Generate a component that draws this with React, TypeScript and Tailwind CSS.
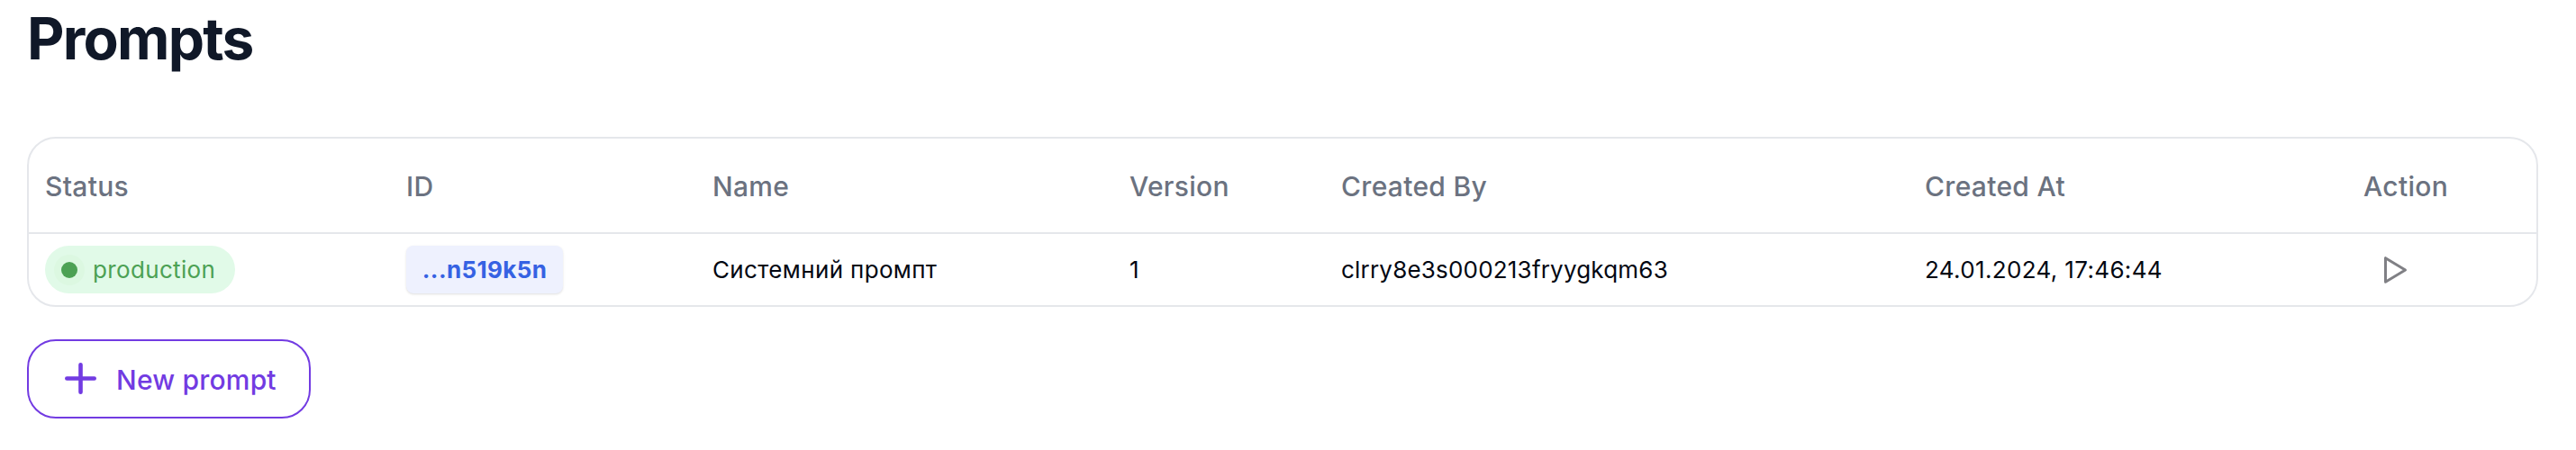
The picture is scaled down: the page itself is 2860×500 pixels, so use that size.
import React from "react";

const headers = ["Status", "ID", "Name", "Version", "Created By", "Created At", "Action"];
const columns = "grid grid-cols-[401px_340px_463px_235px_648px_487px_1fr] items-center pl-[18px]";

export default function App() {
  return (
    <main className="h-[500px] bg-white px-[30px] font-['Inter',sans-serif] text-[26px] leading-10 tracking-[0.35px] text-[#030712]">
      <h1 className="flex h-[152px] items-start pt-[3px] text-[64px] leading-[80px] font-bold tracking-[-0.027em] text-gray-900">
        Prompts
      </h1>
      <section className="w-[2788px] rounded-[32px] border-2 border-[#e5e7eb]">
        <div className={`${columns} h-[106px] border-b-2 border-[#e5e7eb] pt-0.5 text-[30px] font-medium tracking-[0.3px] text-[#6b7280]`}>
          {headers.map((header) => (
            <div key={header}>{header}</div>
          ))}
        </div>
        <div className={`${columns} h-[79px] whitespace-nowrap`}>
          <div className="flex">
            <span className="flex h-[53px] w-[211px] items-center rounded-full bg-[#e1fae8] pl-[10px] text-[#4ca154]">
              <span className="mr-[9px] flex size-[34px] items-center justify-center rounded-full bg-[#dcf8e1]">
                <span className="mr-px size-[18px] rounded-full bg-[#4ca154]" />
              </span>
              production
            </span>
          </div>
          <div className="flex">
            <span className="flex h-[53px] w-[174px] items-center justify-center rounded-lg bg-[#eef1fe] font-bold text-[#3662e3] shadow-sm">
              ...n519k5n
            </span>
          </div>
          <div>Системний промпт</div>
          <div>1</div>
          <div className="tracking-[0.2px]">clrry8e3s000213fryygkqm63</div>
          <div>24.01.2024, 17:46:44</div>
          <div className="pl-[22px]">
            <svg className="h-[32px] w-[28px]" viewBox="0 0 28 32" fill="none" stroke="#808085" strokeWidth="3" strokeLinejoin="round">
              <path d="M2.5 2.7v26.6L24.5 16Z" />
            </svg>
          </div>
        </div>
      </section>
      <button className="mt-9 flex h-[88px] w-[315px] items-center rounded-[32px] border-2 border-[#723be2] pl-[40px] text-[30px] font-medium tracking-[0.2px] text-[#723be2]">
        <svg className="mr-[21px] size-[36px]" viewBox="0 0 36 36" fill="none" stroke="currentColor" strokeWidth="4.6" strokeLinecap="round">
          <path d="M17.5 2.3v30.4M2.3 17.5h30.4" />
        </svg>
        <span className="pt-0.5">New prompt</span>
      </button>
    </main>
  );
}
